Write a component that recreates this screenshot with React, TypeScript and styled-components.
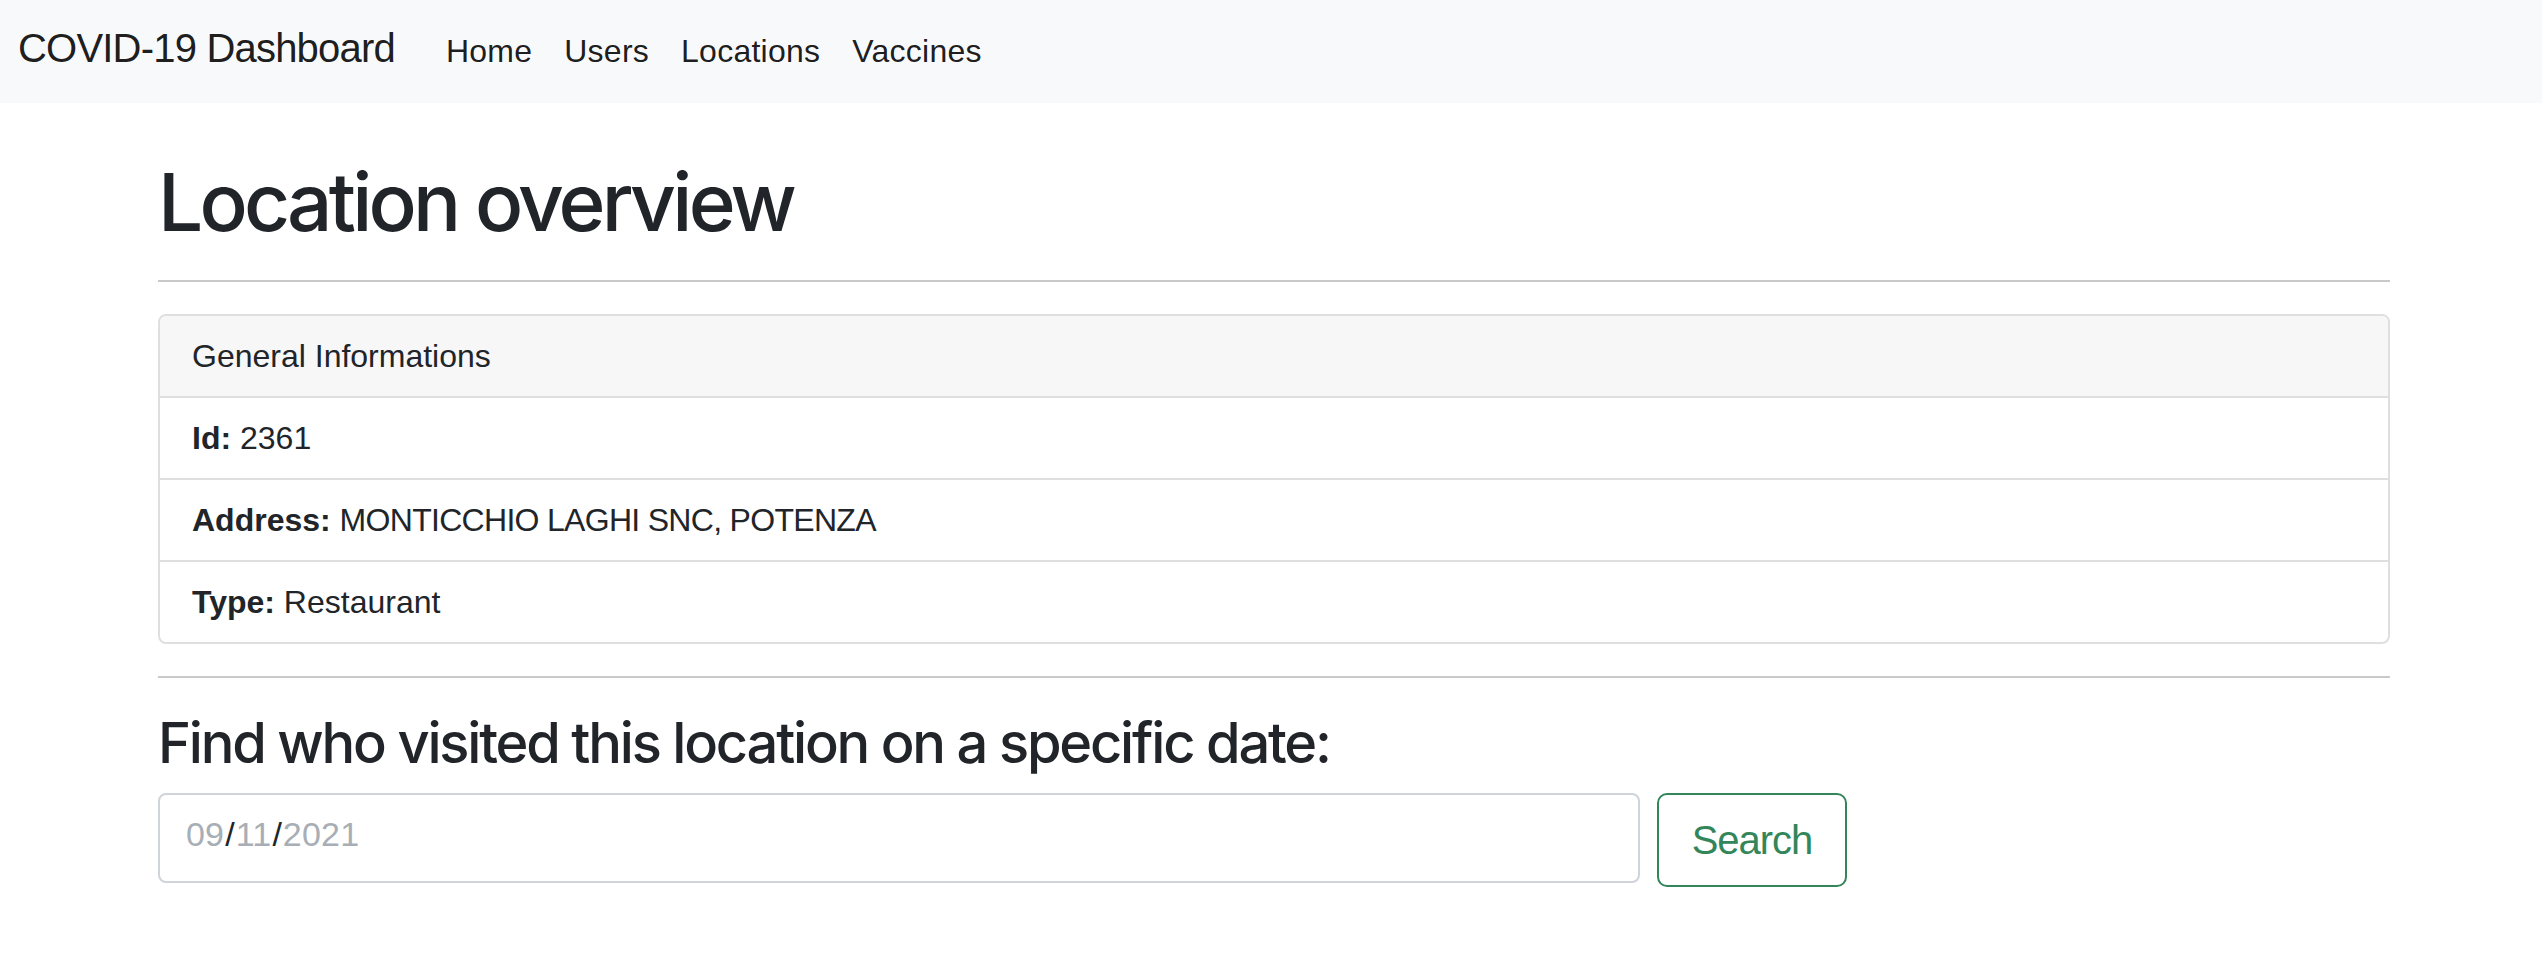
import React from "react";
import styled, { createGlobalStyle } from "styled-components";

const GlobalStyle = createGlobalStyle`
  html, body { margin: 0; padding: 0; background: #ffffff; }
  body {
    font-family: "Liberation Sans", Arial, Helvetica, sans-serif;
    color: #212529;
  }
  * { box-sizing: border-box; }
`;

const Navbar = styled.nav`
  display: flex;
  align-items: baseline;
  height: 103px;
  padding: 18px 0 0 18px;
  background: #f8f9fa;
`;

const Brand = styled.a`
  font-size: 40px;
  line-height: 60px;
  letter-spacing: -0.8px;
  color: rgba(0, 0, 0, 0.9);
  text-decoration: none;
  margin-right: 35px;
`;

const NavList = styled.ul`
  display: flex;
  align-items: baseline;
  list-style: none;
  margin: 0;
  padding: 0;
`;

const NavLink = styled.a`
  display: block;
  font-size: 32px;
  line-height: 48px;
  letter-spacing: 0.25px;
  padding: 0 16px;
  color: rgba(0, 0, 0, 0.9);
  text-decoration: none;
`;

const Main = styled.main`
  width: 2232px;
  margin-left: 158px;
  display: flex;
  flex-direction: column;
`;

const Title = styled.h1`
  margin: 51px 0 0;
  font-family: Inter, "Liberation Sans", Arial, sans-serif;
  font-size: 80px;
  line-height: 96px;
  font-weight: 500;
  letter-spacing: -3.8px;
`;

const Rule = styled.hr<{ $top: number }>`
  margin: ${(p) => p.$top}px 0 32px;
  border: 0;
  border-top: 2px solid #c8c9ca;
  height: 0;
  width: 100%;
`;

const Card = styled.section`
  border: 2px solid #dfdfdf;
  border-radius: 8px;
  overflow: hidden;
`;

const CardHeader = styled.div`
  background: #f7f7f7;
  padding: 16px 32px;
  font-size: 32px;
  line-height: 48px;
`;

const Row = styled.div`
  border-top: 2px solid #dfdfdf;
  padding: 16px 32px;
  font-size: 32px;
  line-height: 48px;
`;

const Label = styled.strong`
  font-weight: 700;
`;

const Value = styled.span<{ $caps?: boolean }>`
  letter-spacing: ${(p) => (p.$caps ? "-0.7px" : "0")};
`;

const SubTitle = styled.h3`
  margin: 0 0 16px;
  font-family: Inter, "Liberation Sans", Arial, sans-serif;
  font-size: 56px;
  line-height: 67px;
  font-weight: 500;
  letter-spacing: -2.2px;
`;

const SearchRow = styled.div`
  display: flex;
  align-items: flex-start;
  gap: 17px;
`;

const DateField = styled.div`
  width: 1482px;
  height: 90px;
  border: 2px solid #ced4da;
  border-radius: 8px;
  display: flex;
  align-items: center;
  padding: 0 24px 8px 26px;
  font-size: 34px;
  line-height: 48px;
`;

const Segment = styled.span`
  color: #a8aeb5;
  letter-spacing: 0.2px;
`;

const Sep = styled.span`
  color: #212529;
  margin: 0 1px;
`;

const SearchButton = styled.button`
  width: 190px;
  height: 94px;
  border: 2px solid #33865a;
  border-radius: 10px;
  background: #ffffff;
  color: #33865a;
  font-family: "Liberation Sans", Arial, Helvetica, sans-serif;
  font-size: 40px;
  line-height: 60px;
  letter-spacing: -1px;
  padding: 0;
  cursor: pointer;
`;

export default function App() {
  return (
    <>
      <GlobalStyle />
      <Navbar>
        <Brand href="#">COVID-19 Dashboard</Brand>
        <NavList>
          {["Home", "Users", "Locations", "Vaccines"].map((l) => (
            <li key={l}>
              <NavLink href="#">{l}</NavLink>
            </li>
          ))}
        </NavList>
      </Navbar>
      <Main>
        <Title>Location overview</Title>
        <Rule $top={30} />
        <Card>
          <CardHeader>General Informations</CardHeader>
          <Row>
            <Label>Id:</Label> <Value>2361</Value>
          </Row>
          <Row>
            <Label>Address:</Label> <Value $caps>MONTICCHIO LAGHI SNC, POTENZA</Value>
          </Row>
          <Row>
            <Label>Type:</Label> <Value>Restaurant</Value>
          </Row>
        </Card>
        <Rule $top={32} />
        <SubTitle>Find who visited this location on a specific date:</SubTitle>
        <SearchRow>
          <DateField>
            <Segment>09</Segment>
            <Sep>/</Sep>
            <Segment>11</Segment>
            <Sep>/</Sep>
            <Segment>2021</Segment>
          </DateField>
          <SearchButton type="button">Search</SearchButton>
        </SearchRow>
      </Main>
    </>
  );
}
